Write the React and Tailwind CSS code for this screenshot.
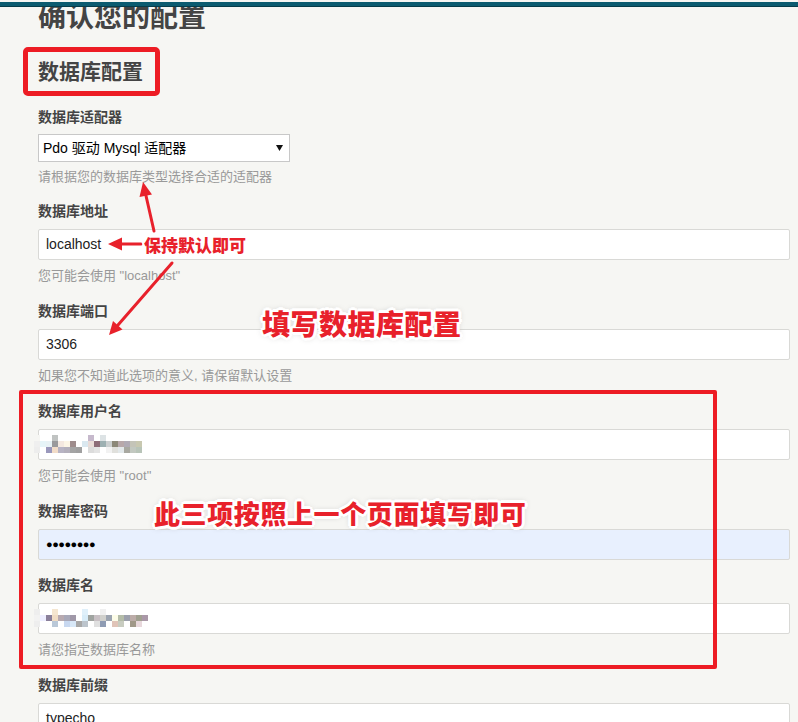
import React from 'react';

const userMosaic = [
  ['#f6f6f3', '#ffffff', '#ffffff', '#c0c3c2', '#ffffff', '#ffffff', '#ffffff', '#ffffff', '#ffffff', '#c6b9cc', '#ffffff', '#dde3e5', '#ffffff', '#ffffff', '#ffffff', '#ffffff', '#ffffff', '#ffffff'],
  ['#efefef', '#e6f4f8', '#e8f2f5', '#9a9a9c', '#f4e8e0', '#fcf5e6', '#9e8c8c', '#ffffff', '#dae8f0', '#eadcd8', '#8d6c78', '#9db0b2', '#cbcfd0', '#8c8878', '#b8a8aa', '#b0aab4', '#c4c4b8', '#c8c8b0'],
  ['#ededed', '#ffffff', '#9a98bc', '#f2dcc8', '#b8b4c4', '#b4b0bc', '#a4a4a4', '#a0a0a0', '#ffffff', '#dcdcdc', '#e4e4e4', '#ffffff', '#f2f2f2', '#e0e0dc', '#e2e8ea', '#a8a8a0', '#c2c8c0', '#b8c4b8'],
];

const dbMosaic = [
  ['#eeeeee', '#ffffff', '#ffffff', '#f5e6d0', '#ffffff', '#ffffff', '#ffffff', '#ffffff', '#e0f0fa', '#ffffff', '#ffffff', '#f0f0f0', '#ffffff', '#ffffff', '#ffffff', '#ffffff', '#ffffff', '#ffffff', '#ffffff'],
  ['#f2f2f2', '#eeeeff', '#8a7f9a', '#f0dcc4', '#b8aab0', '#a8a8b8', '#a098a8', '#ffffff', '#d8ecf8', '#a0a4a0', '#c8c0c4', '#d0d0cc', '#9ca4b0', '#fcfce8', '#b4bca8', '#9ca0ac', '#bcaca8', '#a0a090', '#aa98a8'],
  ['#eeeeee', '#ffffff', '#ffffff', '#bac8d8', '#ffffff', '#c8d8f0', '#d8e8f8', '#a8a8a8', '#bcc4cc', '#ffffff', '#e0e0e0', '#8f9cb4', '#ffffff', '#e0c4b8', '#c8ccc0', '#ffffff', '#a09888', '#e8d8dc', '#ffffff'],
];

function Mosaic({ rows }) {
  const cols = rows[0].length;
  return (
    <svg width={cols * 6} height={rows.length * 6} className="absolute -left-[5px] top-[5px]">
      {rows.map((row, r) =>
        row.map((c, i) => <rect key={r + '-' + i} x={i * 6} y={r * 6} width="6" height="6" fill={c} />)
      )}
    </svg>
  );
}

function Field({ label, help, children, first }) {
  return (
    <div className={first ? 'mt-[14px]' : 'mt-[15px]'}>
      <div className="text-[14px] leading-[20px] font-bold text-[#444]">{label}</div>
      <div className="mt-[8px]">{children}</div>
      {help && <div className="mt-[6px] text-[13px] leading-[20px] text-[#999]">{help}</div>}
    </div>
  );
}

function TextBox({ value, blur, password }) {
  return (
    <div
      className={
        'relative flex h-[31px] w-full items-center rounded-[2px] border border-[#d9d9d6] px-[7px] text-[14px] text-[#222] ' +
        (password ? 'bg-[#e8f0fe]' : 'bg-white')
      }
    >
      {password ? <span className="text-[11px] tracking-[-0.5px] text-black">●●●●●●●●</span> : value}
      {blur && <Mosaic rows={blur} />}
    </div>
  );
}

export default function App() {
  return (
    <div className="relative min-h-screen overflow-hidden bg-[#f6f6f3] font-['Liberation_Sans','Noto_Sans_CJK_SC',sans-serif]">
      <div className="relative z-10 h-[7px] border-t-2 border-[#f6f6f3] bg-[#0b5b70] shadow-[inset_0_-1px_0_#063c4a]"></div>

      <div className="pl-[38px] pr-[8px]">
        <h1 className="-mt-[3px] text-[28px] leading-[28px] font-bold text-[#444]">确认您的配置</h1>

        <div className="-ml-[15px] mt-[15px] inline-block rounded-[5px] border-[5px] border-[#ed1c24] pl-[10px] pr-[12px]">
          <h2 className="text-[21px] leading-[39px] font-bold text-[#444]">数据库配置</h2>
        </div>

        <div className="mt-[11px]">
          <div className="text-[14px] leading-[20px] font-bold text-[#444]">数据库适配器</div>
          <div className="mt-[7px] flex h-[28px] w-[252px] items-center justify-between border border-[#c8c8c8] bg-white pl-[4px] pr-[6px] text-[14px] text-black">
            <span>Pdo 驱动 Mysql 适配器</span>
            <svg width="7" height="6" viewBox="0 0 7 6">
              <polygon points="0,0 7,0 3.5,6" fill="#111" />
            </svg>
          </div>
          <div className="mt-[5px] text-[13px] leading-[20px] text-[#999]">请根据您的数据库类型选择合适的适配器</div>
        </div>

        <Field first label="数据库地址" help={'您可能会使用 "localhost"'}>
          <TextBox value="localhost" />
        </Field>
        <Field label="数据库端口" help="如果您不知道此选项的意义, 请保留默认设置">
          <TextBox value="3306" />
        </Field>
        <Field label="数据库用户名" help={'您可能会使用 "root"'}>
          <TextBox blur={userMosaic} />
        </Field>
        <Field label="数据库密码">
          <TextBox password />
        </Field>
        <Field label="数据库名" help="请您指定数据库名称">
          <TextBox blur={dbMosaic} />
        </Field>
        <Field label="数据库前缀">
          <TextBox value="typecho" />
        </Field>
      </div>

      {/* annotations */}
      <div className="pointer-events-none absolute left-[19px] top-[390px] h-[279px] w-[698px] rounded-[2px] border-[4px] border-[#ed1c24]"></div>

      <svg className="pointer-events-none absolute left-0 top-0" width="798" height="722">
        <g stroke="#e8212b" strokeWidth="3" strokeLinecap="round">
          <line x1="154" y1="231" x2="145.6" y2="194" />
          <line x1="141" y1="244" x2="120" y2="244" />
          <line x1="172" y1="263" x2="118" y2="325" />
        </g>
        <g fill="#e8212b">
          <polygon points="143,182 152,194.5 139.5,197" />
          <polygon points="108,244 122,237.5 122,250.5" />
          <polygon points="109,335 122.5,329.5 113,321" />
        </g>
      </svg>

      <div className="pointer-events-none absolute left-[144px] top-[235px] whitespace-nowrap font-['Noto_Sans_CJK_SC',sans-serif] text-[17px] leading-[20px] font-black text-[#e8212b] [text-shadow:-2px_-2px_0_#fff,2px_-2px_0_#fff,-2px_2px_0_#fff,2px_2px_0_#fff,0_2px_0_#fff,0_-2px_0_#fff,2px_0_0_#fff,-2px_0_0_#fff]">
        保持默认即可
      </div>
      <div className="pointer-events-none absolute left-[262px] top-[306px] whitespace-nowrap font-['Noto_Sans_CJK_SC',sans-serif] text-[28px] leading-[34px] font-black tracking-[0.5px] text-[#e8212b] [text-shadow:-2px_-2px_0_#fff,2px_-2px_0_#fff,-2px_2px_0_#fff,2px_2px_0_#fff,0_3px_0_#fff,0_-3px_0_#fff,3px_0_0_#fff,-3px_0_0_#fff,0_0_6px_#aaa]">
        填写数据库配置
      </div>
      <div className="pointer-events-none absolute left-[154px] top-[497px] whitespace-nowrap font-['Noto_Sans_CJK_SC',sans-serif] text-[26px] leading-[32px] font-black tracking-[0.6px] text-[#e8212b] [text-shadow:-2px_-2px_0_#fff,2px_-2px_0_#fff,-2px_2px_0_#fff,2px_2px_0_#fff,0_3px_0_#fff,0_-3px_0_#fff,3px_0_0_#fff,-3px_0_0_#fff,0_0_6px_#aaa]">
        此三项按照上一个页面填写即可
      </div>
    </div>
  );
}
